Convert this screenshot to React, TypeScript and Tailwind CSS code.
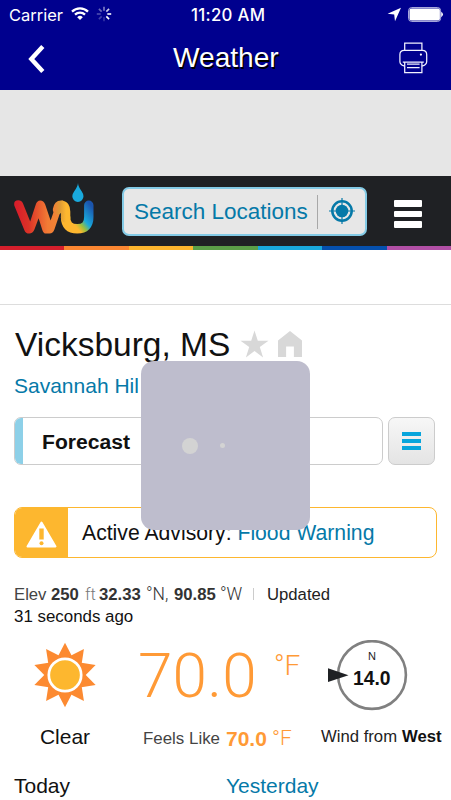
import type { ReactNode } from "react";

const STRIPES = [
  "bg-[#d51f2c]",
  "bg-[#fb8732]",
  "bg-[#fdb62e]",
  "bg-[#5b9f48]",
  "bg-[#19a9dc]",
  "bg-[#0550ad]",
  "bg-[#b14fa5]",
];

const SPOKES = [
  { angle: 0, opacity: 0.5 },
  { angle: 45, opacity: 0.8 },
  { angle: 90, opacity: 1 },
  { angle: 135, opacity: 1 },
  { angle: 180, opacity: 0.2 },
  { angle: 225, opacity: 0.25 },
  { angle: 270, opacity: 0.3 },
  { angle: 315, opacity: 0.4 },
];

const StatusBar = () => (
  <div className="flex h-[29px] items-center font-['Inter',sans-serif] text-[16.5px]">
    <div className="flex w-[191px] items-center pl-[9px]">
      <span className="mt-px w-[54px] whitespace-nowrap">Carrier</span>
      <svg className="mt-[-2px] ml-[8px]" width="18" height="13" viewBox="0 0 18 13" fill="none" stroke="#fff" strokeWidth="2.3">
        <path d="M1 4.6a11.5 11.5 0 0 1 16 0M4 7.7a7.2 7.2 0 0 1 10 0" />
        <path d="M9 13 6.2 10.2a4 4 0 0 1 5.6 0z" fill="#fff" stroke="none" />
      </svg>
      <svg className="mt-[-2px] ml-[7px]" width="16" height="16" viewBox="-8 -8 16 16" stroke="#fff" strokeWidth="1.6">
        {SPOKES.map((s) => (
          <path key={s.angle} d="M0-3.3V-7.2" opacity={s.opacity} transform={`rotate(${s.angle})`} />
        ))}
      </svg>
    </div>
    <span className="mt-[2px] w-[76px] whitespace-nowrap text-[16.8px] font-medium tracking-[0.3px]">11:20 AM</span>
    <svg className="ml-[120px]" width="15" height="15" viewBox="0 0 15 15" fill="#fff">
      <path d="M14 .8 .6 6.8 7.2 7.6 8 14.2z" />
    </svg>
    <svg className="ml-[6px]" width="36" height="15" viewBox="0 0 36 15">
      <rect x=".6" y=".6" width="32" height="13.8" rx="3" fill="#00008e" stroke="#b9b9e5" />
      <rect x="1.5" y="1.5" width="30.4" height="12" rx="2" fill="#fff" />
      <path d="M33.2 4.8q3.6 2.7 0 5.4z" fill="#fff" />
    </svg>
  </div>
);

const PrinterIcon = () => (
  <svg className="mb-[2px]" width="29" height="32" viewBox="0 0 29 32" fill="none" stroke="#f2f2ff" strokeWidth="1.25">
    <path d="M5.7 8.4V1.2h17.2V8.4" />
    <path d="M5.7 23.8H5Q.9 22.8.9 19.5V12.6Q.9 8.4 5.2 8.4H23.4Q27.7 8.4 27.7 12.6v6.9Q27.7 22.8 23.6 23.8H22.9" />
    <path d="M3.8 20.2H24.8M5.7 20.2v10.4h17.2V20.2M8 22.2H20.6M8 25.6H20.6" />
    <circle cx="21.9" cy="12.6" r="1.1" fill="#fff" stroke="none" />
  </svg>
);

const WuLogo = () => (
  <svg width="82" height="52" viewBox="0 0 82 52" fill="none" strokeLinecap="round" strokeLinejoin="round">
    <defs>
      <linearGradient id="w" x1="3" y1="0" x2="50" y2="0" gradientUnits="userSpaceOnUse">
        <stop stopColor="#d81e2a" />
        <stop offset=".25" stopColor="#db3327" />
        <stop offset=".65" stopColor="#f27b35" />
        <stop offset="1" stopColor="#f08a35" />
      </linearGradient>
      <linearGradient id="arch" x1="40" y1="0" x2="52" y2="0" gradientUnits="userSpaceOnUse">
        <stop stopColor="#ef8035" />
        <stop offset=".5" stopColor="#dd9a35" />
        <stop offset="1" stopColor="#fdb72f" />
      </linearGradient>
      <linearGradient id="u" x1="58" y1="42" x2="79" y2="25" gradientUnits="userSpaceOnUse">
        <stop offset=".08" stopColor="#fdb72f" />
        <stop offset=".27" stopColor="#9abf3d" />
        <stop offset=".48" stopColor="#19a9dc" />
        <stop offset="1" stopColor="#1b55ad" />
      </linearGradient>
    </defs>
    <path
      d="M.3 22.5Q-.6 17.3 4.2 17.3 7.6 17.3 9 20.5L16.2 38.5 21.6 22Q22.9 17.4 26.2 17.4 29.6 17.4 31.2 21.5L36.6 37.5 41.2 24.5Q43.8 17.4 49 17.4L52 29.5 46.5 28.5 40.4 46.5Q39 50.6 35.5 50.6H31.8Q29.6 50.6 28.4 47.2L24.6 35.2 20.4 46.5Q18.8 50.6 15.2 50.6 11.6 50.6 10.4 47.2z"
      fill="url(#w)"
    />
    <path d="M51.6 34Q51.6 45.8 63.2 45.8 74.8 45.8 74.8 34V22.2" stroke="url(#u)" strokeWidth="9.4" />
    <path d="M43.5 26.8Q44.2 22.2 47 22.2 51.6 22.2 51.6 28.5V35" stroke="url(#arch)" strokeWidth="9.4" />
    <path d="M64 0Q64.2 3.6 67.8 8.5 69.5 11 69.5 13.3A5.6 5.6 0 0 1 58.3 13.3Q58.3 11 60.1 8.5 63.7 3.6 64 0z" fill="#19a9dc" />
  </svg>
);

const SearchBar = () => (
  <div className="flex h-[70px] bg-[#1f2124] pt-[7px] pl-[14px]">
    <WuLogo />
    <div className="mt-[4px] ml-[26px] flex h-[49px] w-[245px] items-center rounded-[7px] border-[2.5px] border-[#84cbe6] bg-[#e7e7e7] pl-[10px]">
      <span className="mt-px w-[183px] whitespace-nowrap text-[22.5px] text-[#0579a8]">Search Locations</span>
      <div className="h-[34px] w-px bg-[#a8a8a8]" />
      <svg className="mt-[-2px] ml-[10px]" width="28" height="28" viewBox="-14 -14 28 28" fill="none" stroke="#0579a8">
        <circle r="9.7" strokeWidth="2.5" />
        <circle r="6.3" fill="#0579a8" stroke="none" />
        <path d="M0-13V-6M0 6V13M-13 0H-6M6 0H13" strokeWidth="1.2" />
      </svg>
    </div>
    <div className="mt-[17px] ml-[27px] flex flex-col gap-[4px]">
      <div className="h-[6.5px] w-[28px] rounded-[1px] bg-white" />
      <div className="h-[6.5px] w-[28px] rounded-[1px] bg-white" />
      <div className="h-[6.5px] w-[28px] rounded-[1px] bg-white" />
    </div>
  </div>
);

const Thin = ({ children }: { children: ReactNode }) => (
  <span className="font-['Roboto',sans-serif] font-light">{children}</span>
);

const Station = () => (
  <div className="pt-[25px] pl-[14px] text-[16.7px] text-[#333]">
    <div className="flex h-[23px] items-center whitespace-nowrap">
      <span className="w-[37px] text-[#444]">Elev</span>
      <b className="w-[34px]">250</b>
      <span className="w-[14px] text-[#777]">
        <Thin>ft</Thin>
      </span>
      <b className="w-[47px]">32.33</b>
      <span className="w-[28px] text-[17.5px]">
        <Thin>°N,</Thin>
      </span>
      <b className="w-[46px]">90.85</b>
      <span className="w-[33px] text-[17.5px]">
        <Thin>°W</Thin>
      </span>
      <span className="mb-px h-[12px] w-px bg-[#ccc]" />
      <span className="ml-[13px] text-[#222]">Updated</span>
    </div>
    <div className="flex h-[22px] items-center text-[16.9px] text-[#111]">31 seconds ago</div>
  </div>
);

const SunIcon = () => (
  <svg width="66" height="66" viewBox="-33 -33 66 66">
    {[0, 36, 72, 108, 144, 180, 216, 252, 288, 324].map((a) => (
      <path key={a} d="M0-32.2 6.6-19.4V-10H-6.6V-19.4z" fill="#fc8a31" transform={`rotate(${a})`} />
    ))}
    <circle r="16.2" fill="#fdb72f" stroke="#fff" strokeWidth="2.7" />
  </svg>
);

const Conditions = () => (
  <div className="flex">
    <div className="flex w-[130px] flex-col items-center">
      <div className="mt-[2px]">
        <SunIcon />
      </div>
      <span className="mt-[14px] flex h-[30px] items-center text-[21px]">Clear</span>
    </div>
    <div className="w-[191px] whitespace-nowrap pl-[8px] text-[#ff9a36]">
      <div className="flex h-[70px] items-start font-['Roboto',sans-serif] font-light">
        <span className="w-[136px] text-[62px] leading-[71px] tracking-[0.2px]">70.0</span>
        <span className="text-[28px] leading-[52px]">°F</span>
      </div>
      <div className="mt-[14px] flex h-[30px] items-center pl-[5px] text-[21px]">
        <span className="w-[83px] text-[16.9px] text-[#444]">Feels Like</span>
        <b className="w-[46px]">70.0</b>
        <Thin>°F</Thin>
      </div>
    </div>
    <div className="w-[130px] whitespace-nowrap">
      <svg className="ml-[6px]" width="82" height="72" viewBox="0 0 82 72">
        <circle cx="45" cy="35" r="33.9" fill="none" stroke="#808080" strokeWidth="2.6" />
        <path d="M1 28.3 21.5 35.3 1 42z" fill="#1f2124" />
        <text x="45" y="20" fontSize="11" textAnchor="middle" fill="#222">
          N
        </text>
        <text x="44.8" y="45" fontSize="19.3" fontWeight="700" textAnchor="middle" fill="#111">
          14.0
        </text>
      </svg>
      <div className="mt-[10px] flex h-[30px] items-center text-[16.7px] text-[#222]">
        <span className="w-[81px]">Wind from</span>
        <b className="text-[#111]">West</b>
      </div>
    </div>
  </div>
);

const App = () => (
  <div className="relative h-[800px] w-[451px] overflow-hidden bg-white font-['Liberation_Sans',Arial,sans-serif] text-[#111]">
    <header className="h-[90px] bg-[#00008e] text-white">
      <StatusBar />
      <div className="flex h-[60px] items-center">
        <svg className="ml-[28px]" width="17" height="28" viewBox="0 0 17 28" fill="none" stroke="#fff" strokeWidth="4.4">
          <path d="M14.8 1.5 3.3 14 14.8 26.5" />
        </svg>
        <h1 className="mb-[2px] ml-[128px] w-[226px] text-[28.1px] leading-none [text-shadow:1.5px_1.5px_0_#000]">
          Weather
        </h1>
        <PrinterIcon />
      </div>
    </header>
    <div className="h-[86px] bg-[#e6e6e6]" />
    <SearchBar />
    <div className="flex h-[4px]">
      {STRIPES.map((color) => (
        <div key={color} className={`flex-1 ${color}`} />
      ))}
    </div>
    <div className="h-[55px] border-b-[1.5px] border-[#ddd]" />

    {/* Location */}
    <div className="mt-[20px] flex h-[40px] items-center pl-[15px]">
      <h2 className="w-[225px] whitespace-nowrap text-[33.5px] leading-none">Vicksburg, MS</h2>
      <svg className="mb-[3px]" width="29" height="28" viewBox="0 0 29 28" fill="#d8d8d8">
        <path d="m14.5.5 3.3 10.2h10.7l-8.7 6.4 3.3 10.4-8.6-6.4-8.6 6.4 3.3-10.4L.5 10.7h10.7z" />
      </svg>
      <svg className="mb-[2px] ml-[9px]" width="24" height="26" viewBox="0 0 24 26" fill="#d8d8d8">
        <path d="M12 0 24 9.5V26H15.9V15.5H8.1V26H0V9.5z" />
      </svg>
    </div>
    <p className="mt-[6px] h-[30px] pl-[14px] text-[21px] leading-[30px] text-[#0579a8]">Savannah Hil</p>

    {/* Section picker */}
    <div className="mt-[16px] flex gap-[5px] pl-[14px]">
      <div className="flex h-[48px] w-[369px] items-center overflow-hidden rounded-[7px] border border-[#ccc]">
        <div className="-ml-px h-[48px] w-[9px] bg-[#8dd0e8]" />
        <b className="mt-[2px] ml-[19px] text-[21.1px]">Forecast</b>
      </div>
      <div className="flex h-[48px] w-[47px] flex-col items-center justify-center gap-[3px] rounded-[7px] border border-[#ccc] bg-linear-to-b from-[#f7f7f7] to-[#e4e4e4]">
        <div className="h-[4px] w-[19px] bg-[#08a5dc]" />
        <div className="h-[4px] w-[19px] bg-[#08a5dc]" />
        <div className="h-[4px] w-[19px] bg-[#08a5dc]" />
      </div>
    </div>

    {/* Advisory */}
    <div className="mt-[42px] ml-[14px] flex h-[51px] w-[423px] items-center overflow-hidden rounded-[8px] border-[1.5px] border-[#fdb72f]">
      <div className="-ml-px flex h-[51px] w-[54px] items-center justify-center bg-[#fdb72f]">
        <svg className="mt-[4px]" width="31" height="27" viewBox="0 0 31 27">
          <path d="M15.5 1.5 29.5 25.5H1.5z" fill="#fff" stroke="#fff" strokeWidth="2" strokeLinejoin="round" />
          <path d="M13.3 7.5h4.4v11h-4.4z" fill="#fdb72f" />
          <circle cx="15.5" cy="22.2" r="2" fill="#fdb72f" />
        </svg>
      </div>
      <p className="ml-[14px] whitespace-nowrap text-[21.2px]">
        Active Advisory: <span className="text-[#0579a8]">Flood Warning</span>
      </p>
    </div>

    <Station />
    <div className="h-[12px]" />
    <Conditions />

    <div className="mt-[17px] flex h-[30px] items-center pl-[14px] text-[21px]">
      <span className="w-[212px]">Today</span>
      <span className="text-[#0579a8]">Yesterday</span>
    </div>

    {/* Loading overlay */}
    <div className="absolute top-[361px] left-[141px] flex h-[169px] w-[169px] items-center rounded-[13px] bg-[#bebdcd] pl-[41px]">
      <span className="size-[16px] rounded-full bg-[#d3d3d3]" />
      <span className="ml-[22px] size-[5px] rounded-full bg-[#d3d3d3]" />
    </div>
  </div>
);

export default App;
